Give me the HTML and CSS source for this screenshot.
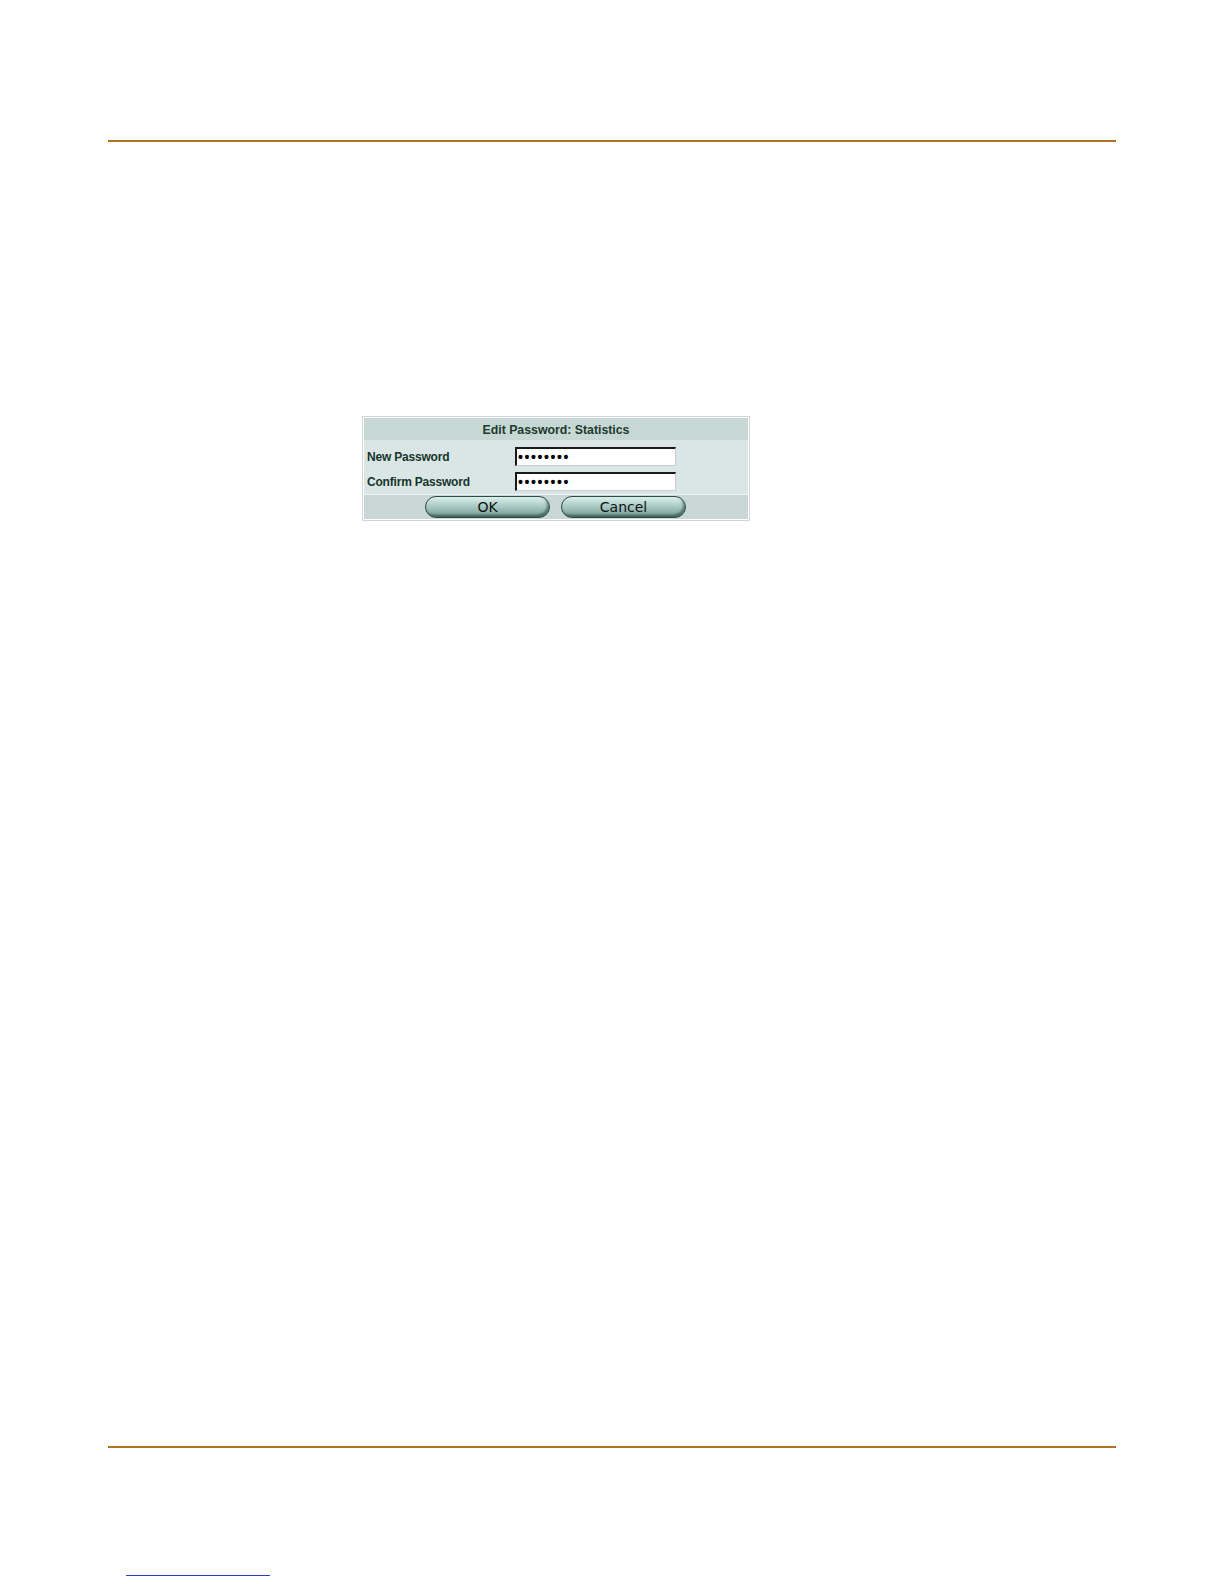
FILE: index.html
```html
<!DOCTYPE html>
<html>
<head>
<meta charset="utf-8">
<link rel="stylesheet" href="styles.css">
</head>
<body>
<div class="page">
  <div class="rule rule-top"></div>
  <div class="dialog">
    <div class="dlg-title">Edit Password: Statistics</div>
    <div class="dlg-body">
      <div class="dlg-row">
        <span class="dlg-label">New Password</span>
        <span class="dlg-input">••••••••</span>
      </div>
      <div class="dlg-row">
        <span class="dlg-label">Confirm Password</span>
        <span class="dlg-input">••••••••</span>
      </div>
    </div>
    <div class="dlg-buttons">
      <span class="pill">OK</span>
      <span class="pill">Cancel</span>
    </div>
  </div>
  <div class="rule rule-bottom"></div>
  <div class="foot-link"></div>
</div>
</body>
</html>
```
FILE: styles.css
```css
html, body {
  margin: 0;
  padding: 0;
  background: #ffffff;
}
.page {
  padding-left: 108px;
  width: 1008px;
  font-family: "Liberation Sans", Arial, sans-serif;
}
.rule {
  height: 2px;
  background: #b3701d;
}
.rule-top {
  margin-top: 140px;
}
.dialog {
  margin-top: 274px;
  margin-left: 254px;
  width: 384px;
  border: 1px solid #cfd6d6;
  padding: 1px;
  background: #ffffff;
}
.dlg-title {
  height: 22px;
  line-height: 25px;
  background: #c6d7d4;
  text-align: center;
  font-size: 12.3px;
  font-weight: bold;
  color: #1f3a2e;
}
.dlg-body {
  background: #d9e6e5;
  padding: 4px 0 0 0;
}
.dlg-row {
  display: flex;
  align-items: center;
  height: 25px;
}
.dlg-label {
  width: 151px;
  padding-left: 3px;
  box-sizing: border-box;
  font-size: 12px;
  font-weight: bold;
  color: #17352a;
  letter-spacing: -0.2px;
}
.dlg-input {
  width: 161px;
  height: 19px;
  box-sizing: border-box;
  background: #ffffff;
  border-top: 2px solid #1a1a1a;
  border-left: 2px solid #1a1a1a;
  border-right: 1px solid #c8cccc;
  border-bottom: 1px solid #c8cccc;
  font-size: 14px;
  line-height: 16px;
  padding-left: 1px;
  letter-spacing: 1.6px;
  color: #000;
  font-weight: bold;
  overflow: hidden;
}
.dlg-buttons {
  border-top: 1px solid #eef3f3;
  background: #c9d8d6;
  height: 24px;
  display: flex;
  align-items: center;
  gap: 11px;
  padding-left: 61px;
}
.pill {
  width: 125px;
  height: 22px;
  box-sizing: border-box;
  border: 1px solid #2d4a45;
  border-radius: 11px;
  background: linear-gradient(to bottom, #dcefeb 0%, #b0cfc9 40%, #8db2ab 75%, #628a83 100%);
  box-shadow: inset -2px -2px 2px rgba(30,60,55,0.5);
  text-align: center;
  line-height: 20px;
  font-size: 14px;
  color: #111;
  font-family: "DejaVu Sans", Verdana, sans-serif;
}
.rule-bottom {
  margin-top: 925px;
}
.foot-link {
  margin-top: 127px;
  margin-left: 18px;
  width: 144px;
  height: 1px;
  background: #2b3fc8;
}
```
